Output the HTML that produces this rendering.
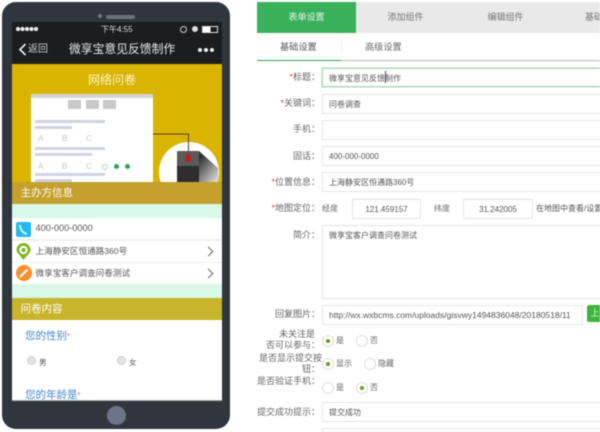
<!DOCTYPE html>
<html><head><meta charset="utf-8"><style>
html,body{margin:0;padding:0;background:#fff}
#r{position:relative;width:600px;height:432px;overflow:hidden;background:#fff;font-family:"Liberation Sans","Noto Sans CJK SC",sans-serif;filter:blur(.4px)}
#r div,#r span.a{position:absolute;white-space:nowrap}
.band{left:12px;width:209px;height:22px;color:#fff;font-size:10.5px;line-height:23px;text-indent:9px}
.row{left:12px;width:209px;background:#fff;color:#555;font-size:8.6px}
.ar{width:6px;height:6px;border-top:1px solid #666;border-right:1px solid #666;transform:rotate(45deg)}
.bar{background:#d0d2e4;height:3px}
.l{color:#c9c9cc;font-size:8.5px}
.lab{right:280px;text-align:right;color:#666;font-size:9px;line-height:11px}
.lab i{color:#e44;font-style:normal}
.in{left:322px;width:290px;height:18px;border:1px solid #e4e4e4;color:#555;font-size:8px;line-height:19px;text-indent:6px;background:#fff}
.rad{width:10px;height:10px;border:1px solid #ddd;border-radius:50%;background:#fff}
.rad.on::after{content:"";position:absolute;left:3px;top:3px;width:4px;height:4px;border-radius:50%;background:#6a9e10}
.t{color:#666;font-size:8px;line-height:10px}
.tab{top:2px;height:31px;line-height:31px;font-size:9px;color:#777;text-align:center;width:99px}
</style></head><body><div id="r">
<!-- phone -->
<div style="left:2px;top:2px;width:228px;height:427px;background:#2f363e;border-radius:14px"></div>
<div style="left:98px;top:14px;width:4px;height:4px;border-radius:50%;background:#6c7a85"></div>
<div style="left:106px;top:14.5px;width:29px;height:4px;border-radius:2px;background:#67737d"></div>
<div style="left:11.5px;top:22px;width:210px;height:42px;background:#1c1d21"></div>
<div style="left:16px;top:27px;width:3.6px;height:3.6px;border-radius:50%;background:#eee;box-shadow:4.5px 0 #eee,9px 0 #eee,13.5px 0 #eee,18px 0 #eee"></div>
<div style="left:101px;top:24px;color:#ddd;font-size:8px;line-height:11px">下午4:55</div>
<div style="left:180px;top:25.5px;width:5px;height:5px;border:1px solid #ccc;border-radius:50%"></div>
<div style="left:192px;top:25.5px;width:6px;height:6px;background:#ddd;border-radius:50%"></div>
<div style="left:202px;top:26px;width:14px;height:5px;border:1px solid #ddd;background:linear-gradient(90deg,#fff 55%,#1c1d21 55%)"></div>
<svg style="position:absolute;left:18px;top:43px" width="9" height="13"><path d="M7.5 1 L2 6.5 L7.5 12" fill="none" stroke="#eee" stroke-width="1.7"/></svg>
<div style="left:28px;top:43px;color:#ccc;font-size:10px;line-height:13px">返回</div>
<div style="left:69px;top:42px;color:#e8e8e8;font-size:11.8px;line-height:15px">微享宝意见反馈制作</div>
<div style="left:198px;top:48px;width:4px;height:4px;border-radius:50%;background:#eee;box-shadow:6px 0 #eee,12px 0 #eee"></div>
<!-- yellow hero -->
<div style="left:11.5px;top:64px;width:210px;height:118px;background:#d9b400"></div>
<div style="left:88px;top:72px;color:#fbf3d0;font-size:12px;line-height:16px">网络问卷</div>
<div style="left:31px;top:94px;width:122px;height:88px;background:#fff"></div>
<div style="left:31px;top:94px;width:122px;height:4px;background:#d3d3d3"></div>
<div style="left:68px;top:100px;width:13px;height:9px;background:#c9c9c9"></div>
<div style="left:86px;top:100px;width:13px;height:9px;background:#c9c9c9"></div>
<div style="left:103px;top:100px;width:13px;height:9px;background:#c9c9c9"></div>
<div class="bar" style="left:35px;top:120px;width:70px"></div>
<div class="bar" style="left:35px;top:126px;width:37px"></div>
<div class="l" style="left:38px;top:133px">A</div><div class="l" style="left:62px;top:133px">B</div><div class="l" style="left:86px;top:133px">C</div>
<div class="bar" style="left:35px;top:147px;width:70px"></div>
<div class="bar" style="left:35px;top:153px;width:57px"></div>
<div class="l" style="left:38px;top:161px">A</div><div class="l" style="left:62px;top:161px">B</div><div class="l" style="left:86px;top:161px">C</div>
<div style="left:102px;top:164px;width:4px;height:4px;border:1px solid #a8dcb8;border-radius:50%"></div>
<div style="left:114px;top:164px;width:5px;height:5px;border-radius:50%;background:#26a850"></div>
<div style="left:125px;top:164px;width:5px;height:5px;border-radius:50%;background:#26a850"></div>
<div class="bar" style="left:35px;top:173px;width:70px"></div>
<div class="bar" style="left:35px;top:179px;width:37px"></div>
<svg style="position:absolute;left:153px;top:130px" width="69" height="52">
<defs><linearGradient id="g" x1="0" x2="1" y1="0" y2="1"><stop offset=".25" stop-color="#333"/><stop offset="1" stop-color="#e4e4e4"/></linearGradient></defs>
<circle cx="36" cy="42" r="30" fill="#fff"/>
<path d="M0 4 H35.5 V22" fill="none" stroke="#5a3a20" stroke-width="1"/>
<path d="M40 21 H46 L65 38 V52 H40Z" fill="url(#g)"/>
<rect x="24" y="21" width="22" height="31" rx="1" fill="#5a5a5a"/>
<rect x="24" y="36" width="22" height="16" fill="#2e2e2e"/>
<rect x="33" y="24" width="4.5" height="8" rx="2" fill="#d01515"/>
</svg>
<!-- info -->
<div class="band" style="left:11.5px;top:182px;width:210px;background:#c4a02c;">主办方信息</div>
<div style="left:11.5px;top:204px;width:210px;height:14px;background:#d9f8ea"></div>
<div style="left:11.5px;top:218px;width:210px;height:66px;background:#eef1f0"></div>
<div class="row" style="left:11.5px;width:210px;top:218px;height:21px;line-height:21px;text-indent:24px;font-size:9.2px">400-000-0000</div>
<div class="row" style="left:11.5px;width:210px;top:240.5px;height:21px;line-height:21px;text-indent:24px">上海静安区恒通路360号</div>
<div class="row" style="left:11.5px;width:210px;top:263px;height:21px;line-height:21px;text-indent:24px">微享宝客户调查问卷测试</div>
<div style="left:16px;top:222px;width:15px;height:15px;border-radius:2px;background:#22b8f0"></div>
<svg style="position:absolute;left:17px;top:223px" width="13" height="13"><path d="M3 2 C3 7 6 10 10 11" fill="none" stroke="#d8f4ff" stroke-width="2"/></svg>
<svg style="position:absolute;left:16px;top:243px" width="15" height="17.5" viewBox="0 0 17 20"><path d="M8.5 19.5 C5 14 .5 11.5 .5 8 A8 8 0 0 1 16.5 8 C16.5 11.5 12 14 8.5 19.5Z" fill="#7cb81c"/><circle cx="8.5" cy="8" r="4.8" fill="#fff"/><circle cx="8.5" cy="8" r="2.4" fill="#7cb81c"/></svg>
<div style="left:16px;top:265px;width:16px;height:16px;border-radius:50%;background:#f98e2a"></div>
<svg style="position:absolute;left:16px;top:265px" width="16" height="16"><path d="M4.5 11.5 L11 5" stroke="#fff" stroke-width="2" stroke-linecap="round"/></svg>
<div class="ar" style="left:205px;top:247.5px"></div>
<div class="ar" style="left:205px;top:270px"></div>
<div style="left:11.5px;top:284px;width:210px;height:14px;background:#d9f8ea"></div>
<div class="band" style="left:11.5px;top:298px;width:210px;background:#c8b52c;">问卷内容</div>
<div style="left:11.5px;top:320px;width:210px;height:80px;background:#fff;border-bottom:1px solid #aaa"></div>
<div style="left:25px;top:329px;color:#4a86c8;font-size:10.5px;line-height:14px">您的性别<span style="color:#f66;font-size:8px">*</span></div>
<div style="left:27px;top:356px;width:7px;height:7px;border-radius:50%;background:#e4e4e4;border:1px solid #ccc"></div>
<div style="left:39px;top:358px;color:#555;font-size:7.5px;line-height:10px">男</div>
<div style="left:117px;top:356px;width:7px;height:7px;border-radius:50%;background:#e4e4e4;border:1px solid #ccc"></div>
<div style="left:129px;top:358px;color:#555;font-size:7.5px;line-height:10px">女</div>
<div style="left:25px;top:388px;color:#4a86c8;font-size:10.5px;line-height:14px;height:12px;overflow:hidden">您的年龄是<span style="color:#f66;font-size:8px">*</span></div>
<div style="left:107px;top:406px;width:19px;height:19px;border-radius:50%;background:#6e7488"></div>
<!-- tabs -->
<div style="left:257px;top:2px;width:343px;height:31px;background:#e9e9e9"></div>
<div class="tab" style="left:257px;background:#3bb05a;color:#e4f5e8">表单设置</div>
<div class="tab" style="left:356px">添加组件</div>
<div class="tab" style="left:456px">编辑组件</div>
<div class="tab" style="left:554px;width:46px;text-align:left;text-indent:31px;overflow:hidden">基础</div>
<div style="left:280px;top:41px;color:#555;font-size:9.2px;line-height:12px">基础设置</div>
<div style="left:365px;top:41px;color:#666;font-size:9.2px;line-height:12px">高级设置</div>
<div style="left:341px;top:40px;width:1px;height:13px;background:#eee"></div>
<div style="left:257px;top:60px;width:343px;height:1px;background:#bbb"></div>
<div style="left:257px;top:60px;width:84px;height:1px;background:#2fa84f"></div>
<!-- form -->
<div class="lab" style="top:72px"><i>*</i>标题：</div>
<div class="in" style="top:68px;border-color:#a9dcb4;height:17px;box-shadow:0 0 0 .5px #a9dcb4">微享宝意见反馈制作</div>
<div style="left:385px;top:71px;width:1px;height:12px;background:#446"></div>
<div class="lab" style="top:98px"><i>*</i>关键词：</div>
<div class="in" style="top:94px">问卷调查</div>
<div class="lab" style="top:124px">手机：</div>
<div class="in" style="top:120px"></div>
<div class="lab" style="top:150.5px">固话：</div>
<div class="in" style="top:146px">400-000-0000</div>
<div class="lab" style="top:177px"><i>*</i>位置信息：</div>
<div class="in" style="top:172px">上海静安区恒通路360号</div>
<div class="lab" style="top:203px"><i>*</i>地图定位：</div>
<div class="t" style="left:322px;top:204px">经度</div>
<div class="in" style="top:199px;left:352px;width:67px;text-align:center;text-indent:0">121.459157</div>
<div class="t" style="left:434px;top:204px">纬度</div>
<div class="in" style="top:199px;left:463px;width:68px;text-align:center;text-indent:0">31.242005</div>
<div class="t" style="left:536px;top:204px;color:#555">在地图中查看/设置</div>
<div class="lab" style="top:229.5px">简介：</div>
<div class="in" style="top:225px;height:72px;text-indent:0"><span class="a" style="left:6px;top:0">微享宝客户调查问卷测试</span></div>
<div class="lab" style="top:309px">回复图片：</div>
<div class="in" style="top:305px;width:259px;font-size:8.5px;color:#555;text-indent:6px">http://wx.wxbcms.com/uploads/gisvwy1494836048/20180518/11</div>
<div style="left:586.5px;top:305px;width:20px;height:17px;background:#3fb33f;border-radius:2px;color:#dff5df;font-size:9px;line-height:17px;text-indent:4px">上</div>
<div class="lab" style="top:328.5px">未关注是&nbsp;&nbsp;<br>否可以参与：</div>
<div class="rad on" style="left:322px;top:335px"></div><div class="t" style="left:336px;top:336px">是</div>
<div class="rad" style="left:356px;top:335px"></div><div class="t" style="left:370px;top:336px">否</div>
<div class="lab" style="top:353px;right:278px">是否显示提交按<br><span style="margin-right:2px">钮：</span></div>
<div class="rad on" style="left:322px;top:358px"></div><div class="t" style="left:336px;top:359px">显示</div>
<div class="rad" style="left:364px;top:358px"></div><div class="t" style="left:378px;top:359px">隐藏</div>
<div class="lab" style="top:376px">是否验证手机：</div>
<div class="rad" style="left:322px;top:382px"></div><div class="t" style="left:336px;top:383px">是</div>
<div class="rad on" style="left:356px;top:382px"></div><div class="t" style="left:370px;top:383px">否</div>
<div class="lab" style="top:407px">提交成功提示：</div>
<div class="in" style="top:402px">提交成功</div>
<div class="in" style="top:428px"></div>
</div></body></html>
